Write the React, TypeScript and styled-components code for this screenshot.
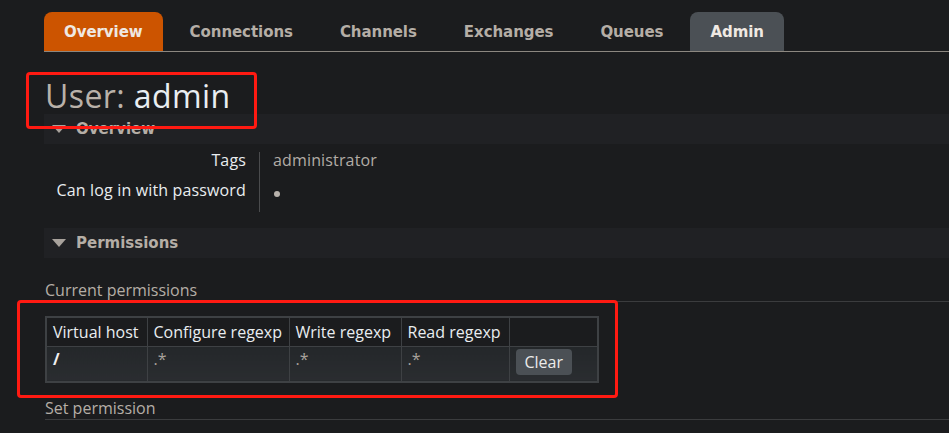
import React from "react";
import styled, { createGlobalStyle } from "styled-components";

const Global = createGlobalStyle`
  html, body { margin: 0; padding: 0; background: #1b1c1e; }
  body { font-family: "Open Sans", "Liberation Sans", sans-serif; color: #e6e6e6; }
`;

const Page = styled.div`
  position: relative;
  width: 949px;
  height: 433px;
  overflow: hidden;
  background: #1b1c1e;
  padding-left: 44px;
  box-sizing: border-box;
`;

const Tabs = styled.nav`
  display: flex;
  margin-top: 12px;
  height: 39px;
  border-bottom: 1px solid #8c8780;
`;

const Tab = styled.div<{ $variant?: "active" | "admin" }>`
  display: flex;
  align-items: center;
  padding: 0 20px;
  margin-right: 7px;
  border-radius: 8px 8px 0 0;
  font-family: "DejaVu Sans", Verdana, sans-serif;
  font-weight: bold;
  font-size: 15px;
  letter-spacing: -0.06px;
  color: ${(p) => (p.$variant ? "#efe9e3" : "#b5aea6")};
  background: ${(p) =>
    p.$variant === "active" ? "#cc5400" : p.$variant === "admin" ? "#4b5055" : "transparent"};
`;

const Title = styled.h1`
  margin: 0 0 0 1px;
  padding-top: 26px;
  height: 36px;
  line-height: 36px;
  font-size: 32px;
  letter-spacing: 0.4px;
  font-weight: normal;
  color: #b9b1a9;
`;

const TitleName = styled.span`
  color: #e9eef2;
`;

const SectionHeader = styled.div<{ $mt?: number }>`
  display: flex;
  align-items: center;
  height: 30px;
  margin-top: ${(p) => p.$mt ?? 0}px;
  background: #202124;
  font-family: "DejaVu Sans", Verdana, sans-serif;
  font-weight: bold;
  font-size: 15px;
  color: #b5aea6;
`;

const Arrow = styled.span`
  width: 0;
  height: 0;
  margin: 0 10px 0 8px;
  border-left: 7px solid transparent;
  border-right: 7px solid transparent;
  border-top: 8px solid #a8a29c;
`;

const Props = styled.div`
  display: grid;
  grid-template-columns: 215px auto;
  margin-top: 8px;
  width: 500px;
`;

const PropLabel = styled.div`
  text-align: right;
  padding-right: 13px;
  height: 30px;
  font-size: 16px;
  line-height: 16px;
  letter-spacing: 0.15px;
  color: #e9edf0;
`;

const PropValue = styled.div`
  border-left: 1px solid #4a4b4d;
  padding-left: 13px;
  height: 30px;
  font-size: 16px;
  line-height: 16px;
  letter-spacing: 0.15px;
  color: #b2aca6;
`;

const Dot = styled.span`
  display: inline-block;
  width: 6px;
  height: 6px;
  border-radius: 50%;
  background: #b8b2ac;
  margin-left: 1px;
  vertical-align: -1px;
`;

const SubHeading = styled.h3<{ $mt: number }>`
  margin: ${(p) => p.$mt}px 0 0 1px;
  font-size: 16px;
  font-weight: normal;
  line-height: 20px;
  color: #b5aea6;
  padding-bottom: 1px;
  border-bottom: 1px solid #3b3c3e;
`;

const Table = styled.table`
  margin: 14px 0 0 1px;
  border-collapse: collapse;
  table-layout: fixed;
  width: 552px;
  font-size: 16px;
  border: 2px solid #3e4144;
`;

const Th = styled.th<{ $w: number }>`
  width: ${(p) => p.$w}px;
  font-weight: normal;
  text-align: left;
  padding: 0 6px;
  height: 29px;
  color: #e9edf0;
  border: 1px solid #3e4144;
  white-space: nowrap;
  box-sizing: border-box;
`;

const Td = styled.td<{ $strong?: boolean }>`
  height: 36px;
  padding: 0 6px;
  vertical-align: top;
  padding-top: 1px;
  box-sizing: border-box;
  color: ${(p) => (p.$strong ? "#f0f0f0" : "#a8a29c")};
  font-weight: ${(p) => (p.$strong ? "bold" : "normal")};
  border: 1px solid #3e4144;
  background: linear-gradient(#24272a, #2a2d30);
`;

const ClearButton = styled.button`
  display: block;
  margin-top: 1px;
  font-family: "Open Sans", "Liberation Sans", sans-serif;
  font-size: 16px;
  color: #ecebea;
  background: #4b5055;
  border: none;
  border-radius: 4px;
  padding: 0 9px;
  height: 26px;
  cursor: pointer;
`;

const Annot = styled.div`
  position: absolute;
  border: 3px solid #ff1a12;
  border-radius: 4px;
  pointer-events: none;
  box-sizing: border-box;
`;

export default function App() {
  return (
    <>
      <Global />
      <Page>
        <Tabs>
          <Tab $variant="active">Overview</Tab>
          <Tab>Connections</Tab>
          <Tab>Channels</Tab>
          <Tab>Exchanges</Tab>
          <Tab>Queues</Tab>
          <Tab $variant="admin">Admin</Tab>
        </Tabs>
        <Title>
          User: <TitleName>admin</TitleName>
        </Title>
        <SectionHeader>
          <Arrow />
          Overview
        </SectionHeader>
        <Props>
          <PropLabel>Tags</PropLabel>
          <PropValue>administrator</PropValue>
          <PropLabel>Can log in with password</PropLabel>
          <PropValue>
            <Dot />
          </PropValue>
        </Props>
        <SectionHeader $mt={16}>
          <Arrow />
          Permissions
        </SectionHeader>
        <SubHeading $mt={22}>Current permissions</SubHeading>
        <Table>
          <thead>
            <tr>
              <Th $w={101}>Virtual host</Th>
              <Th $w={142}>Configure regexp</Th>
              <Th $w={112}>Write regexp</Th>
              <Th $w={108}>Read regexp</Th>
              <Th $w={89}></Th>
            </tr>
          </thead>
          <tbody>
            <tr>
              <Td $strong>/</Td>
              <Td>.*</Td>
              <Td>.*</Td>
              <Td>.*</Td>
              <Td>
                <ClearButton>Clear</ClearButton>
              </Td>
            </tr>
          </tbody>
        </Table>
        <SubHeading $mt={15}>Set permission</SubHeading>
        <Annot style={{ left: 26, top: 72, width: 231, height: 57 }} />
        <Annot style={{ left: 17, top: 300, width: 601, height: 98 }} />
      </Page>
    </>
  );
}
